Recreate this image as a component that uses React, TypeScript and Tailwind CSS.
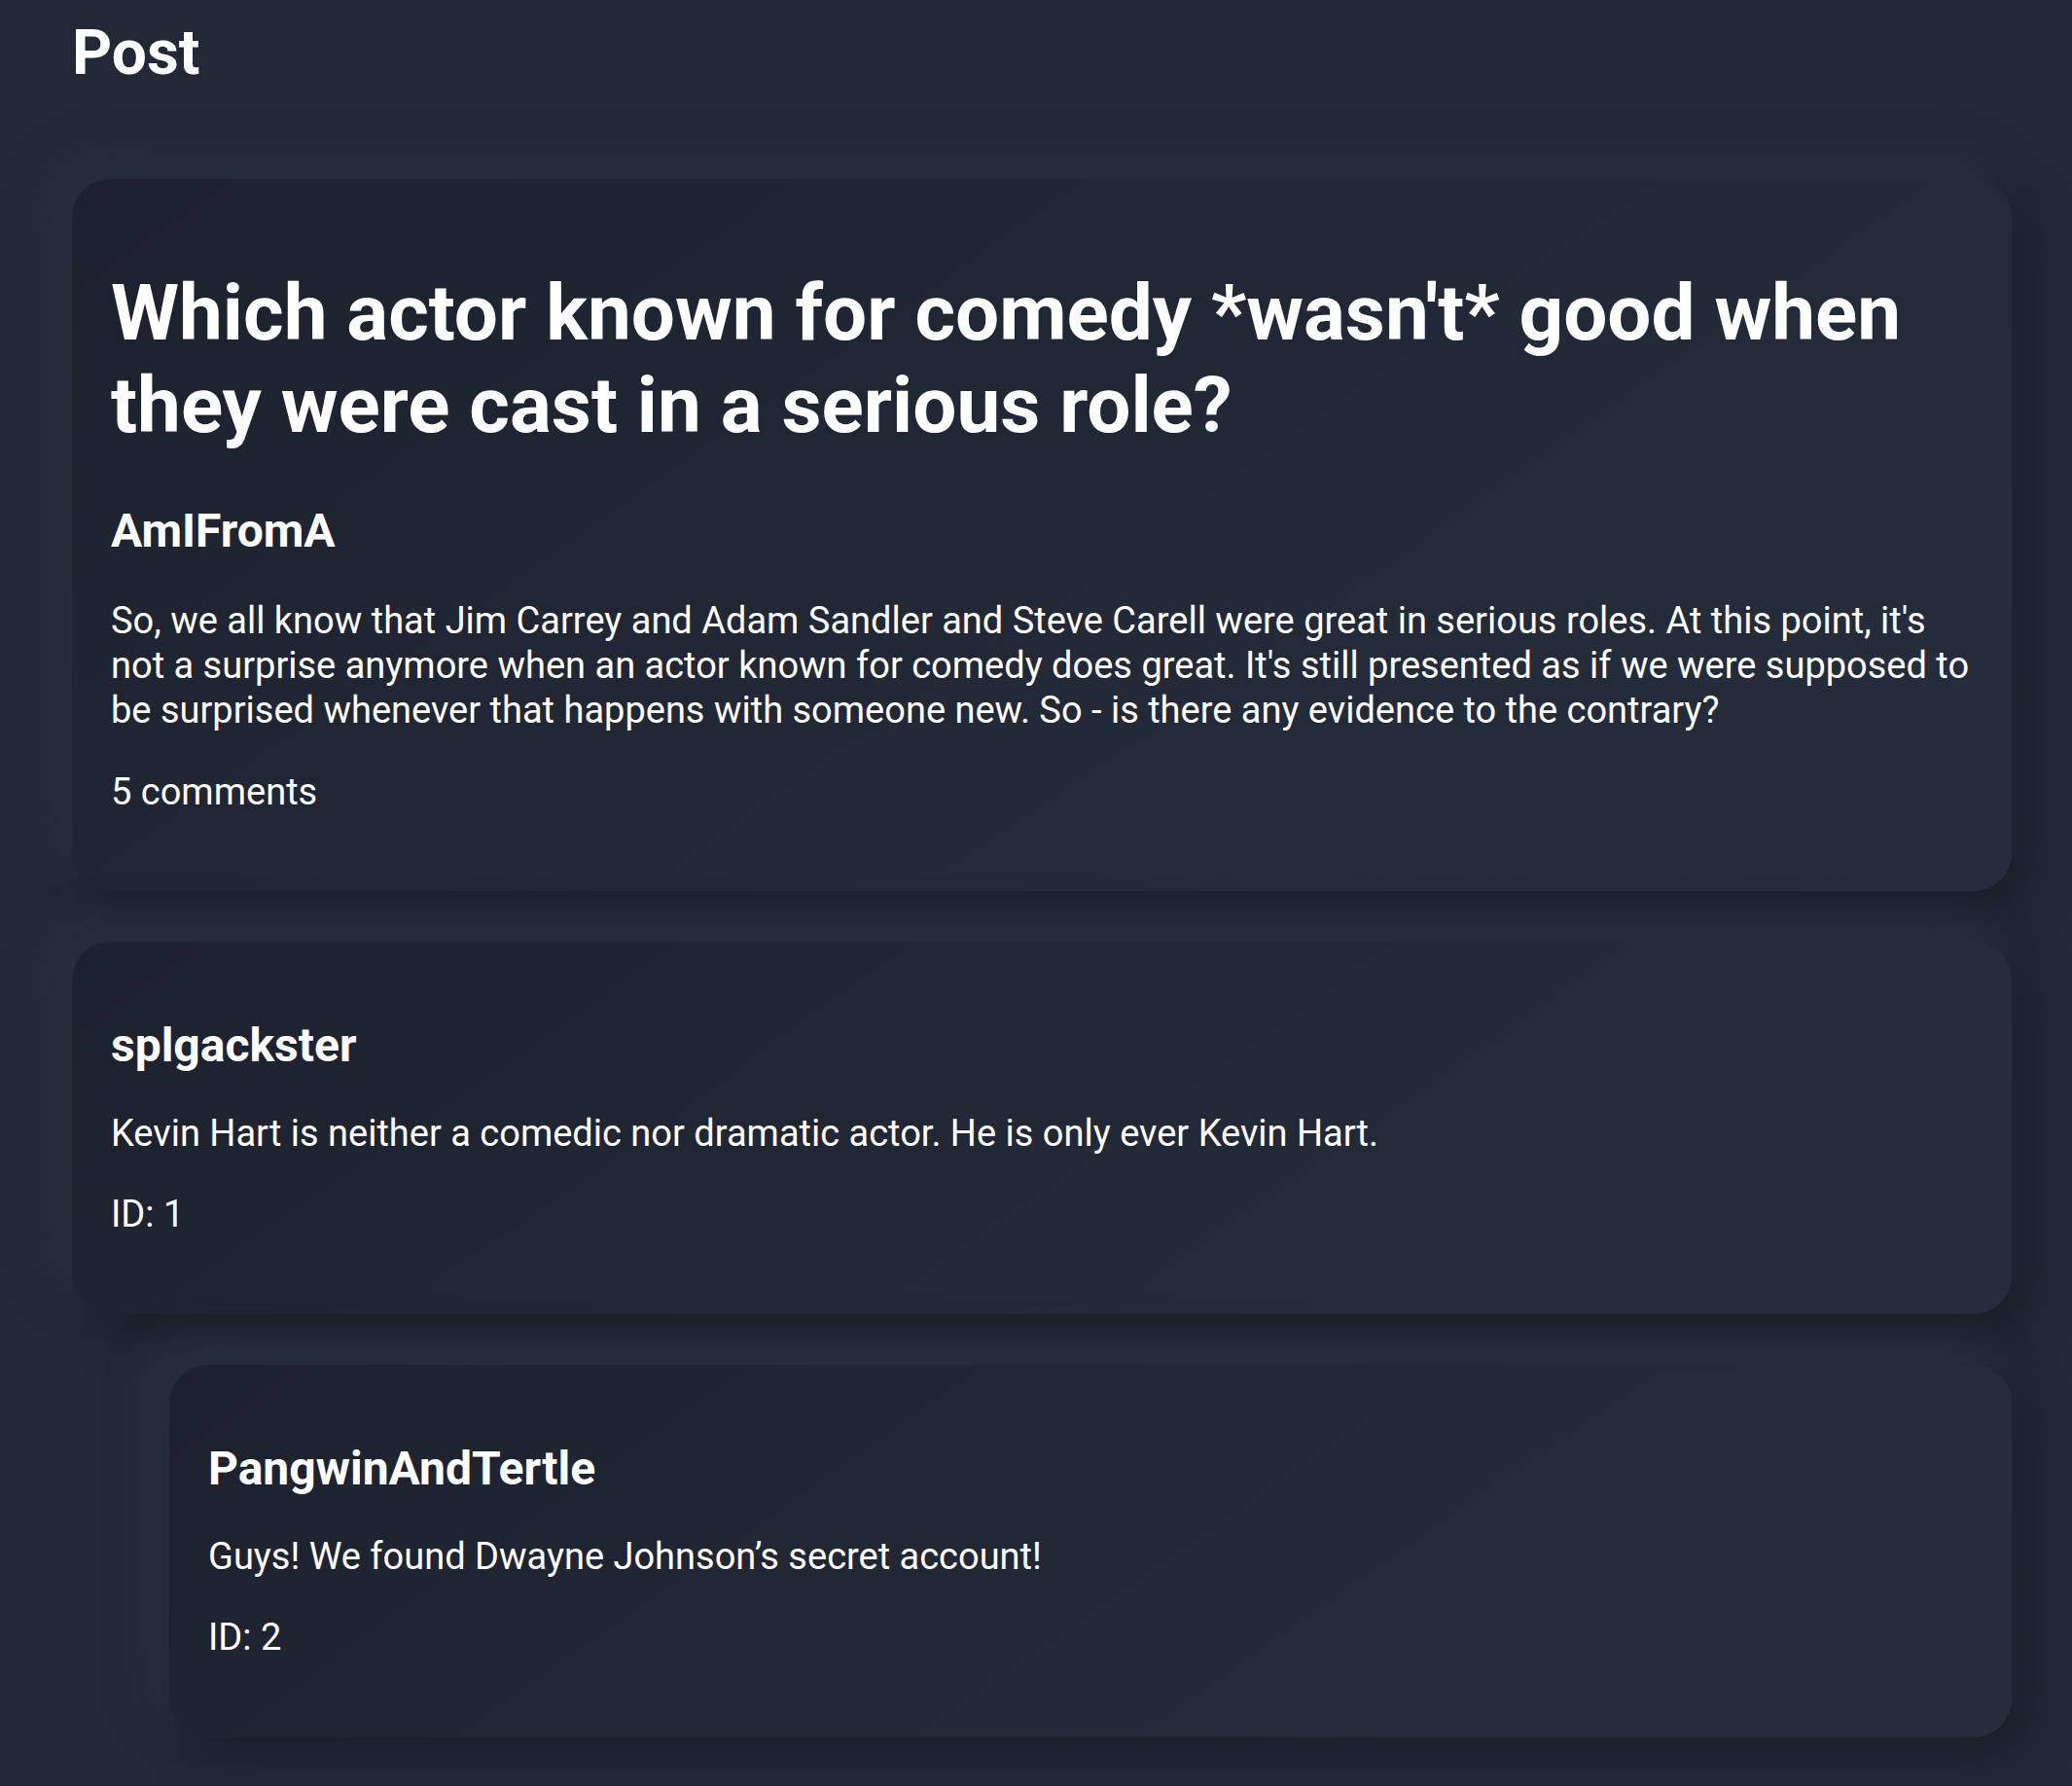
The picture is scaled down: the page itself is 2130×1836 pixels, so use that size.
import { FC } from 'react';

interface CommentData {
    id: number;
    author: string;
    body: string;
    depth: number;
}

const comments: CommentData[] = [
    { id: 1, author: 'splgackster', body: 'Kevin Hart is neither a comedic nor dramatic actor. He is only ever Kevin Hart.', depth: 0 },
    { id: 2, author: 'PangwinAndTertle', body: 'Guys! We found Dwayne Johnson\u2019s secret account!', depth: 1 },
];

const card = 'rounded-[40px] bg-[linear-gradient(145deg,#1d212e,#262e3d)] shadow-[20px_20px_40px_#1b202b,-20px_-20px_40px_#29303f]';

const Comment: FC<{ comment: CommentData }> = ({ comment }) => (
    <div className={`${card} px-[40px] pt-[78px] pb-[80px] ${comment.depth > 0 ? 'ml-[100px]' : ''}`}>
        <h3 className='text-[48px] leading-[58px] font-bold mb-[38px]'>{comment.author}</h3>
        <p className='text-[38px] leading-[46px] mb-[37px]'>{comment.body}</p>
        <p className='text-[38px] leading-[46px]'>ID: {comment.id}</p>
    </div>
);

const App: FC = () => {
    return (
        <div className='min-h-screen bg-[#222835] text-white font-["Roboto",sans-serif] pl-[74px] pr-[62px] pt-[17px] pb-[60px]'>
            <h2 className='text-[64px] leading-[75px] font-bold mb-[92px]'>Post</h2>
            <div className='flex flex-col gap-[52px]'>
                <div className={`${card} px-[40px] pt-[91px] pb-[79px]`}>
                    <h1 className='text-[80px] leading-[95px] font-bold mb-[52px]'>
                        Which actor known for comedy *wasn't* good when they were cast in a serious role?
                    </h1>
                    <h3 className='text-[48px] leading-[58px] font-bold mb-[40px]'>AmIFromA</h3>
                    <p className='text-[38px] leading-[46px] mb-[38px]'>
                        So, we all know that Jim Carrey and Adam Sandler and Steve Carell were great in serious roles. At this point, it's not a surprise anymore when an actor known for comedy does great. It's still presented as if we were supposed to be surprised whenever that happens with someone new. So - is there any evidence to the contrary?
                    </p>
                    <p className='text-[38px] leading-[46px]'>5 comments</p>
                </div>
                {comments.map((c) => <Comment key={c.id} comment={c} />)}
            </div>
        </div>
    );
};

export default App;
